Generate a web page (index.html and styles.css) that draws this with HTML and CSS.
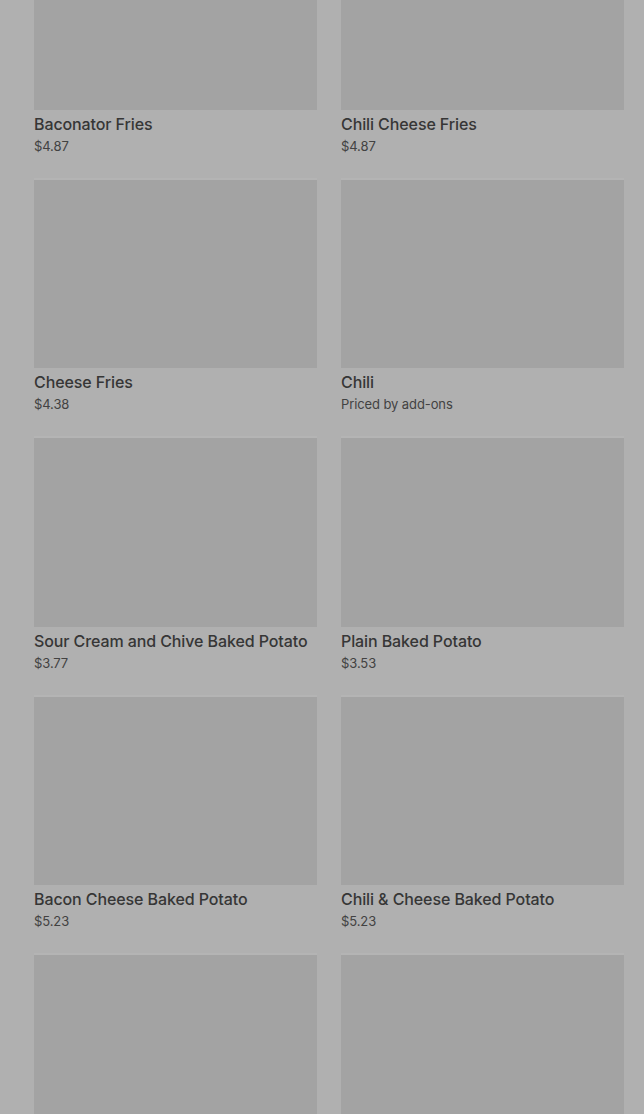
FILE: index.html
```html
<!DOCTYPE html>
<html lang="en">
<head>
    <meta charset="UTF-8">
    <meta name="viewport" content="width=device-width, initial-scale=1.0">
    <title>Menu</title>
    <link rel="stylesheet" href="styles.css">
</head>
<body>
    <div id="menu-grid">
        <div class="item">
            <div class="thumb"></div>
            <div class="name">Baconator Fries</div>
            <div class="price">$4.87</div>
        </div>
        <div class="item">
            <div class="thumb"></div>
            <div class="name">Chili Cheese Fries</div>
            <div class="price">$4.87</div>
        </div>
        <div class="item">
            <div class="thumb"></div>
            <div class="name">Cheese Fries</div>
            <div class="price">$4.38</div>
        </div>
        <div class="item">
            <div class="thumb"></div>
            <div class="name">Chili</div>
            <div class="price">Priced by add-ons</div>
        </div>
        <div class="item">
            <div class="thumb"></div>
            <div class="name">Sour Cream and Chive Baked Potato</div>
            <div class="price">$3.77</div>
        </div>
        <div class="item">
            <div class="thumb"></div>
            <div class="name">Plain Baked Potato</div>
            <div class="price">$3.53</div>
        </div>
        <div class="item">
            <div class="thumb"></div>
            <div class="name">Bacon Cheese Baked Potato</div>
            <div class="price">$5.23</div>
        </div>
        <div class="item">
            <div class="thumb"></div>
            <div class="name">Chili &amp; Cheese Baked Potato</div>
            <div class="price">$5.23</div>
        </div>
        <div class="item">
            <div class="thumb"></div>
        </div>
        <div class="item">
            <div class="thumb"></div>
        </div>
    </div>
</body>
</html>
```

FILE: styles.css
```css
html, body {
    height: 100%;
    overflow: hidden;
}

body {
    margin: 0;
    background-color: #b0b0b0;
    font-family: 'Inter', 'Liberation Sans', sans-serif;
}

#menu-grid {
    display: grid;
    grid-template-columns: 283px 283px;
    column-gap: 24px;
    padding: 0 20px 0 34px;
    margin-top: -78.33px;
}

.item {
    height: 258.33px;
}

.thumb {
    height: 188.33px;
    background-color: #a3a3a3;
    box-shadow: 0 -2px 0 #b4b4b4;
}

.name {
    margin-top: 4px;
    font-size: 16px;
    line-height: 20px;
    font-weight: 500;
    letter-spacing: -0.1px;
    color: #363636;
}

.price {
    margin-top: 3px;
    font-size: 13px;
    line-height: 18px;
    letter-spacing: -0.1px;
    color: #424242;
}
```
